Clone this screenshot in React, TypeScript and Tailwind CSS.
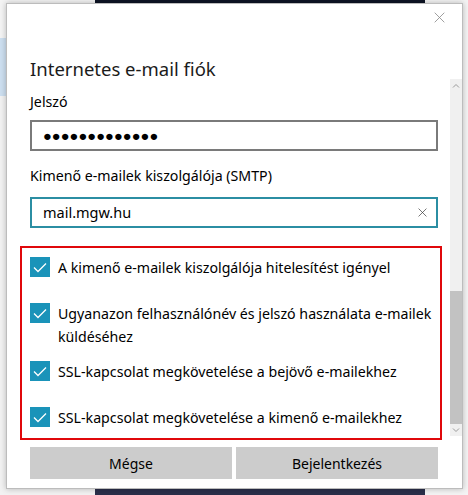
import * as React from 'react';

const FONT: React.CSSProperties = {
  fontFamily: "'Segoe UI', 'Noto Sans', 'Open Sans', Arial, sans-serif",
};

const OPTIONS = [
  'A kimenő e-mailek kiszolgálója hitelesítést igényel',
  'Ugyanazon felhasználónév és jelszó használata e-mailek küldéséhez',
  'SSL-kapcsolat megkövetelése a bejövő e-mailekhez',
  'SSL-kapcsolat megkövetelése a kimenő e-mailekhez',
];

function CloseIcon({ size }: { size: number }) {
  return (
    <svg width={size} height={size} viewBox="0 0 16 16" fill="none" stroke="currentColor" strokeWidth="1.2">
      <path d="M1 1 L15 15 M15 1 L1 15" />
    </svg>
  );
}

function CheckBox() {
  return (
    <span className="flex h-[20px] w-[20px] shrink-0 items-center justify-center bg-[#1a93b9]">
      <svg width="14" height="11" viewBox="0 0 14 11" fill="none" stroke="white" strokeWidth="1.3">
        <path d="M1 5.5 L5 9.5 L13 1.5" />
      </svg>
    </span>
  );
}

export default function App() {
  return (
    <div className="relative h-[495px] w-[468px] overflow-hidden bg-[#e9e9e9]" style={FONT}>
      {/* background app behind the modal */}
      <div className="flex h-full w-full">
        <div className="flex w-[95px] flex-col">
          <div className="h-[38px] bg-[#f4f4f4]" />
          <div className="h-[58px] bg-[#cddff0]" />
          <div className="flex-1 bg-[#f2f2f2]" />
        </div>
        <div className="flex flex-1 flex-col">
          <div className="h-[4px] bg-[#0d1424]" />
          <div className="flex-1 bg-white" />
          <div className="h-[10px] bg-[#2a2f4a]" />
        </div>
        <div className="w-[43px] bg-[#f4f4f4]" />
      </div>

      {/* modal */}
      <div className="absolute left-[6px] top-[3px] flex h-[486px] w-[457px] border border-[#bcbcbc] bg-white shadow-[0_0_6px_rgba(0,0,0,0.25)]">
        <div className="flex flex-1 flex-col pl-[23px] pr-[3px]">
          <div className="flex justify-end pr-[2px] pt-[8px] text-[#8a8a8a]">
            <CloseIcon size={11} />
          </div>
          <h1 className="mt-[33px] text-[18.5px] leading-[26px] text-[#1b1b1b]">Internetes e-mail fiók</h1>

          <div className="mt-[10px] text-[14.2px] leading-[20px] text-black">Jelszó</div>
          <div className="mt-[8px] flex h-[31px] w-[408px] items-center border-2 border-[#7a7a7a] px-[11px]">
            <span className="text-[14.7px] leading-none text-black">●●●●●●●●●●●●●</span>
          </div>

          <div className="mt-[15px] text-[14.2px] leading-[20px] text-black">Kimenő e-mailek kiszolgálója (SMTP)</div>
          <div className="mt-[11px] flex h-[31px] w-[408px] items-center justify-between border-2 border-[#2b8ea3] pl-[11px] pr-[9px]">
            <span className="text-[14.5px] text-black">mail.mgw.hu</span>
            <span className="text-[#333]">
              <CloseIcon size={9} />
            </span>
          </div>

          <div className="-ml-[10px] mt-[18px] flex w-[422px] flex-col gap-[13px] border-2 border-[#e0080b] pb-[4px] pl-[8px] pr-[2px] pt-[9px]">
            {OPTIONS.map((label) => (
              <div key={label} className="flex min-h-[33px] items-start gap-[8px] last:min-h-[27px]">
                <CheckBox />
                <span className="-mt-[1px] text-[14.2px] leading-[23px] text-black">{label}</span>
              </div>
            ))}
          </div>

          <div className="mt-[7px] flex w-[408px] gap-[4px]">
            <button className="h-[32px] flex-1 bg-[#cccccc] text-[14px] text-black">Mégse</button>
            <button className="h-[32px] flex-1 bg-[#cccccc] text-[14px] text-black">Bejelentkezés</button>
          </div>
        </div>

        {/* scrollbar */}
        <div className="mt-[75px] mb-[52px] flex w-[12px] flex-col items-center bg-[#f0f0f0] text-[#9a9a9a]">
          <svg width="8" height="8" viewBox="0 0 8 8" className="mt-[3px]" fill="none" stroke="currentColor">
            <path d="M1 5.5 L4 2.5 L7 5.5" />
          </svg>
          <div className="flex-1" />
          <div className="h-[133px] w-full bg-[#c2c2c2]" />
          <svg width="8" height="8" viewBox="0 0 8 8" className="my-[2px]" fill="none" stroke="currentColor">
            <path d="M1 2.5 L4 5.5 L7 2.5" />
          </svg>
        </div>
      </div>
    </div>
  );
}
